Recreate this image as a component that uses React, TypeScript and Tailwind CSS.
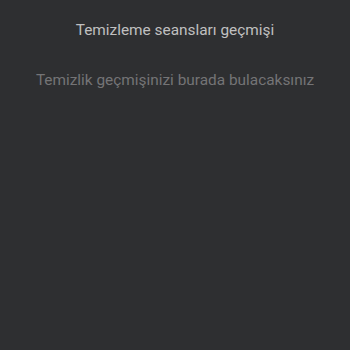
export default function App() {
  return (
    <div className="w-[350px] h-[350px] bg-[#2e2f31] flex flex-col items-center" style={{ fontFamily: "Roboto, sans-serif" }}>
      <div className="mt-[20px] text-[15.4px] leading-[20px] text-[#c0c0c0]">Temizleme seansları geçmişi</div>
      <div className="mt-[30px] text-[15.4px] leading-[20px] text-[#747476]">Temizlik geçmişinizi burada bulacaksınız</div>
    </div>
  );
}
